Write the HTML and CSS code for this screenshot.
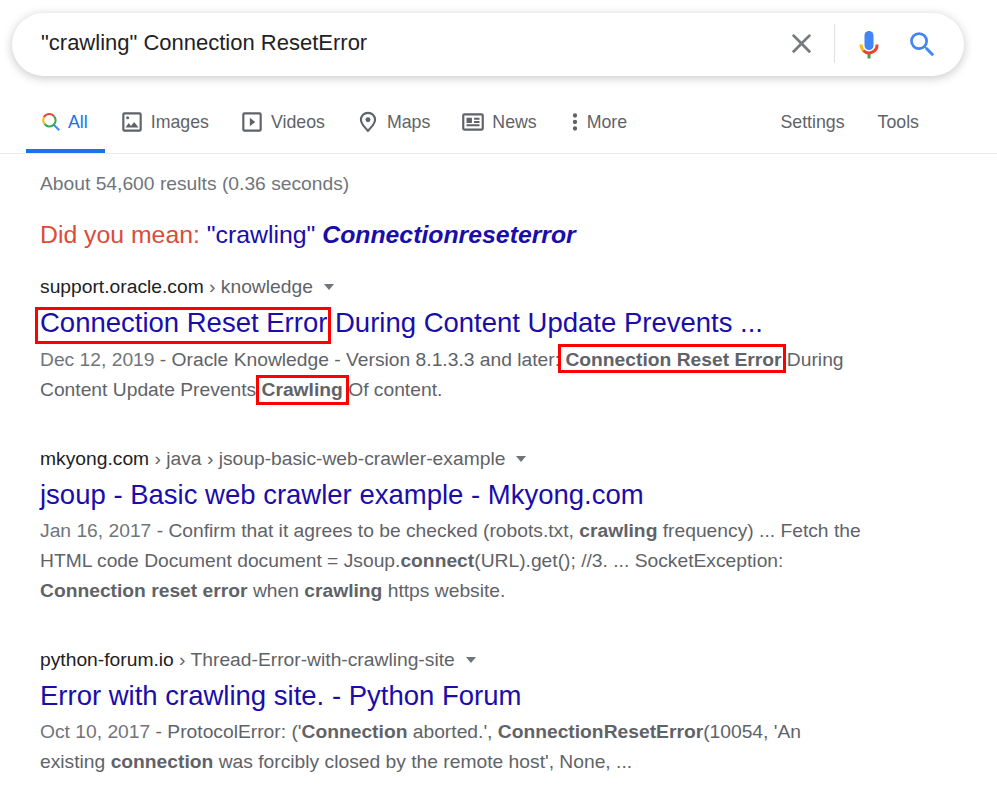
FILE: index.html
```html
<!DOCTYPE html>
<html lang="en">
<head>
<meta charset="utf-8">
<title>"crawling" Connection ResetError - Search</title>
<link rel="stylesheet" href="styles.css">
</head>
<body>
<header class="top">
  <div class="searchbar">
    <div class="query">"crawling" Connection ResetError</div>
    <svg class="ic-x" viewBox="0 0 24 24" width="33" height="33"><path fill="#757a7d" d="M19 6.41 17.59 5 12 10.59 6.41 5 5 6.41 10.59 12 5 17.59 6.41 19 12 13.41 17.59 19 19 17.59 13.41 12z"/></svg>
    <span class="divider"></span>
    <svg class="ic-mic" viewBox="0 0 24 30" width="24" height="30"><rect fill="#4285f4" x="7.5" y="1" width="9" height="19" rx="4.5"/><rect fill="#34a853" x="10.5" y="23.5" width="3" height="5"/><path fill="none" stroke="#fbbc05" stroke-width="3" d="M4 14.5a8 8 0 0 0 2.3 6"/><path fill="none" stroke="#ea4335" stroke-width="3" d="M6.3 20.5A8 8 0 0 0 20 14.5"/></svg>
    <svg class="ic-search" viewBox="0 0 24 24" width="33" height="33"><path fill="#4285f4" d="M15.5 14h-.79l-.28-.27A6.47 6.47 0 0 0 16 9.5 6.5 6.5 0 1 0 9.5 16c1.61 0 3.09-.59 4.23-1.57l.27.28v.79l5 4.99L20.49 19l-4.99-5zm-6 0C7.01 14 5 11.99 5 9.5S7.01 5 9.5 5 14 7.01 14 9.5 11.99 14 9.5 14z"/></svg>
  </div>
  <nav class="tabs">
    <a class="tab active"><svg class="ic-all" viewBox="0 0 24 24" width="22" height="22"><path fill="none" stroke="#4285f4" stroke-width="2.2" d="M15 15l6 6"/><path fill="none" stroke="#ea4335" stroke-width="2.2" d="M4.2 7A6.6 6.6 0 0 1 15.5 6"/><path fill="none" stroke="#fbbc05" stroke-width="2.2" d="M4.2 7a6.6 6.6 0 0 0 .8 7"/><path fill="none" stroke="#34a853" stroke-width="2.2" d="M5 14a6.6 6.6 0 0 0 10 1 6.6 6.6 0 0 0 .5-9"/></svg>All</a>
    <a class="tab"><svg viewBox="0 0 24 24" width="26" height="26"><path fill="#5f6368" d="M19 3H5a2 2 0 0 0-2 2v14a2 2 0 0 0 2 2h14a2 2 0 0 0 2-2V5a2 2 0 0 0-2-2zm0 16H5V5h14v14zm-5-7-3 3.72L9 13l-3 4h12l-4-5z"/><circle fill="#5f6368" cx="8" cy="8" r="1.4"/></svg>Images</a>
    <a class="tab"><svg viewBox="0 0 24 24" width="26" height="26"><path fill="#5f6368" d="M19 3H5a2 2 0 0 0-2 2v14a2 2 0 0 0 2 2h14a2 2 0 0 0 2-2V5a2 2 0 0 0-2-2zm0 16H5V5h14v14zM10 8v8l5-4z"/></svg>Videos</a>
    <a class="tab"><svg viewBox="0 0 24 24" width="26" height="26"><path fill="#5f6368" d="M12 2.500a7.500 7.500 0 0 0-7.500 7.500c0 4.600 7.500 11.500 7.500 11.500s7.500-6.900 7.500-11.500A7.500 7.500 0 0 0 12 2.500zm0 16.300C9.700 16.300 6.500 12.800 6.500 10a5.500 5.500 0 0 1 11 0c0 2.800-3.200 6.300-5.500 8.800z"/><circle fill="#5f6368" cx="12" cy="10" r="2.300"/></svg>Maps</a>
    <a class="tab"><svg viewBox="0 0 24 24" width="26" height="26"><path fill="#5f6368" d="M20 4H4a2 2 0 0 0-2 2v12a2 2 0 0 0 2 2h16a2 2 0 0 0 2-2V6a2 2 0 0 0-2-2zm0 14H4V6h16v12zM6 8h5v5H6zm7 0h5v2h-5zm0 3h5v2h-5zm-7 3h12v2H6z"/></svg>News</a>
    <a class="tab more"><svg viewBox="0 0 24 24" width="26" height="26"><path fill="#5f6368" d="M12 8a2 2 0 1 0 0-4 2 2 0 0 0 0 4zm0 2a2 2 0 1 0 0 4 2 2 0 0 0 0-4zm0 6a2 2 0 1 0 0 4 2 2 0 0 0 0-4z"/></svg>More</a>
    <span class="tabs-right"><a class="tab plain">Settings</a><a class="tab plain">Tools</a></span>
  </nav>
</header>
<main class="results">
  <div class="stats">About 54,600 results (0.36 seconds)</div>
  <div class="didyoumean"><span class="dym-label">Did you mean:</span> <a class="dym-link">"crawling" <b><i>Connectionreseterror</i></b></a></div>

  <article class="result">
    <div class="crumb"><span class="host">support.oracle.com</span> › knowledge<span class="caret"></span></div>
    <h3 class="title"><span class="mark mark-title">Connection Reset Error</span> During Content Update Prevents ...</h3>
    <p class="snippet"><span class="date">Dec 12, 2019</span> - Oracle Knowledge - Version 8.1.3.3 and later: <span class="mark mark-phrase"><b>Connection Reset Error</b></span> During<br>Content Update Prevents <span class="mark mark-word"><b>Crawling</b></span> Of content.</p>
  </article>

  <article class="result">
    <div class="crumb"><span class="host">mkyong.com</span> › java › jsoup-basic-web-crawler-example<span class="caret"></span></div>
    <h3 class="title">jsoup - Basic web crawler example - Mkyong.com</h3>
    <p class="snippet"><span class="date">Jan 16, 2017</span> - Confirm that it agrees to be checked (robots.txt, <b>crawling</b> frequency) ... Fetch the<br>HTML code Document document = Jsoup.<b>connect</b>(URL).get(); //3. ... SocketException:<br><b>Connection reset error</b> when <b>crawling</b> https website.</p>
  </article>

  <article class="result">
    <div class="crumb"><span class="host">python-forum.io</span> › Thread-Error-with-crawling-site<span class="caret"></span></div>
    <h3 class="title">Error with crawling site. - Python Forum</h3>
    <p class="snippet"><span class="date">Oct 10, 2017</span> - ProtocolError: ('<b>Connection</b> aborted.', <b>ConnectionResetError</b>(10054, 'An<br>existing <b>connection</b> was forcibly closed by the remote host', None, ...</p>
  </article>
</main>
</body>
</html>
```
FILE: styles.css
```css
html, body { margin: 0; padding: 0; background: #fff; }
body {
  font-family: "Liberation Sans", Arial, sans-serif;
  color: #5f6368;
  height: 796px;
  overflow: hidden;
  padding-top: 13px;
  box-sizing: border-box;
}
.top { border-bottom: 1px solid #ebebeb; height: 140px; box-sizing: content-box; }
.searchbar {
  margin-left: 12px;
  width: 952px;
  height: 63px;
  box-sizing: border-box;
  border-radius: 32px;
  background: #fff;
  box-shadow: 0 2px 8px 1px rgba(64, 60, 67, .24);
  display: flex;
  align-items: center;
  padding: 0 25px 0 29px;
}
.query { flex: 1; font-size: 22px; color: #222; position: relative; top: -2px; }
.ic-x { margin-right: 16px; position: relative; top: -1px; }
.divider { width: 1px; height: 39px; background: #dfe1e5; margin-right: 22px; position: relative; top: -1px; }
.ic-mic { margin-right: 25px; }
.tabs {
  display: flex;
  align-items: stretch;
  margin-top: 20px;
  height: 57px;
  padding-left: 26px;
  font-size: 17.75px;
}
.tab {
  display: flex;
  align-items: center;
  gap: 6px;
  padding: 0 16px 4px 14px;
  color: #5f6368;
  box-sizing: border-box;
  height: 57px;
}
.tab svg { margin-top: -2px; }
.tab.active { color: #1a73e8; border-bottom: 4px solid #1a73e8; padding: 0 17px 0 14px; gap: 6px; }
.tab.more { gap: 0; padding-left: 9px; }
.tab.more svg { margin-right: -1px; }
.tab.plain { padding: 0 0 4px 33px; }
.tabs-right { margin-left: auto; margin-right: 78px; display: flex; }
.results { padding-left: 40px; width: 830px; }
.stats { margin-top: 18px; font-size: 19.25px; line-height: 24px; color: #70757a; }
.didyoumean { margin-top: 24px; font-size: 24.8px; line-height: 30px; }
.dym-label { color: #dd4b39; }
.dym-link { color: #1a0dab; }
.result { margin-bottom: 42px; }
.didyoumean + .result { margin-top: 25px; }
.crumb { font-size: 19.25px; line-height: 24px; color: #5f6368; display: flex; white-space: pre; align-items: center; }
.host { color: #202124; }
.caret { width: 0; height: 0; border: 5.5px solid transparent; border-top: 6px solid #70757a; border-bottom: 0; margin-left: 11px; }
.title { margin: 5px 0 0; font-weight: 400; font-size: 27.5px; line-height: 38px; color: #1a0dab; white-space: nowrap; }
.snippet { margin: 2px 0 0; font-size: 19.25px; line-height: 30px; color: #5f6368; white-space: nowrap; }
.didyoumean + .result .snippet { margin-top: 3px; }
.date { color: #70757a; }
.snippet b { color: #5f6368; }
.mark { position: relative; }
.mark::after { content: ""; position: absolute; border: 3px solid #f00; box-sizing: border-box; pointer-events: none; }
.mark-title::after { inset: 0 -4px -6px -5px; }
.mark-phrase::after { inset: -5px -4px -3px -7px; }
.mark-word::after { inset: -4px -6px -5px -6px; }
```
